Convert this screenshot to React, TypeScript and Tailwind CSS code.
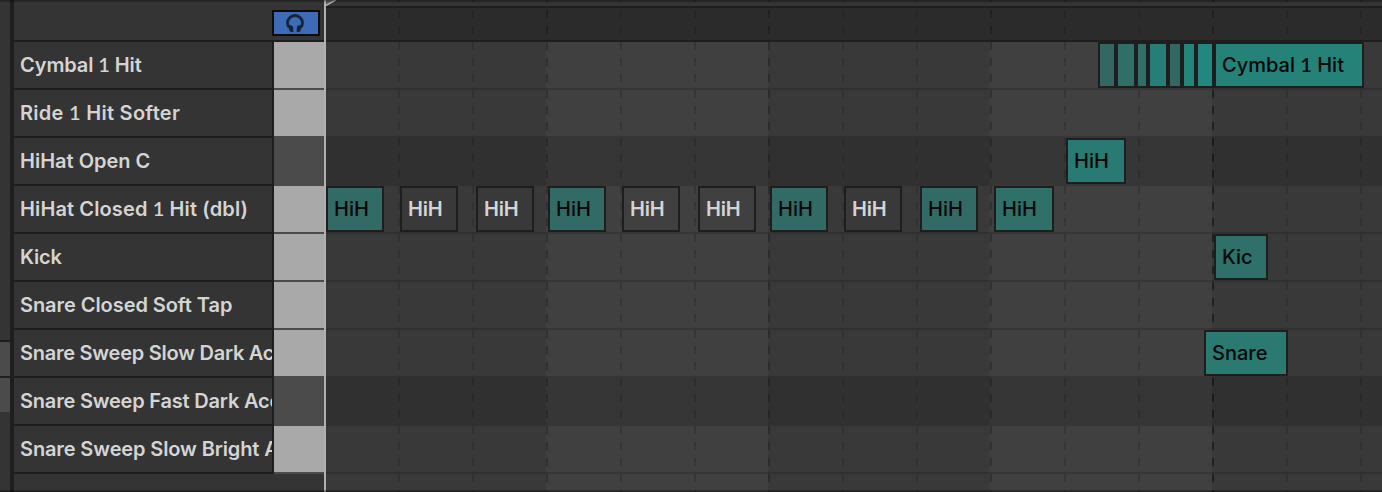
import React from 'react';

type Note = { left: number; width: number; tone: string; label?: string; light?: boolean };
type Track = { name: string; spacing: string; black?: boolean; notes?: Note[] };

const GREY = 'bg-[#393939]';
const GREY_BRIGHT = 'bg-[#404040]';
const TEAL = 'bg-[#326b65]';

const tracks: Track[] = [
  {
    name: 'Cymbal 1 Hit', spacing: 'tracking-[-0.1px]',
    notes: [
      { left: 772, width: 18, tone: 'bg-[#346762]' },
      { left: 790, width: 20, tone: 'bg-[#306e68]' },
      { left: 810, width: 12, tone: 'bg-[#306e68]' },
      { left: 822, width: 20, tone: 'bg-[#277e76]' },
      { left: 842, width: 14, tone: 'bg-[#346762]' },
      { left: 856, width: 14, tone: 'bg-[#23867d]' },
      { left: 870, width: 18, tone: 'bg-[#22877e]' },
      { left: 888, width: 150, tone: 'bg-[#248279]', label: 'Cymbal 1 Hit' },
    ],
  },
  { name: 'Ride 1 Hit Softer', spacing: 'tracking-[0.28px]' },
  { name: 'HiHat Open C', spacing: 'tracking-[0px]', black: true, notes: [{ left: 740, width: 60, tone: 'bg-[#297a72]', label: 'HiH' }] },
  {
    name: 'HiHat Closed 1 Hit (dbl)', spacing: 'tracking-[0.12px]',
    notes: [
      { left: 0, width: 58, tone: TEAL, label: 'HiH' },
      { left: 74, width: 58, tone: GREY, label: 'HiH', light: true },
      { left: 150, width: 58, tone: GREY, label: 'HiH', light: true },
      { left: 222, width: 58, tone: TEAL, label: 'HiH' },
      { left: 296, width: 58, tone: GREY_BRIGHT, label: 'HiH', light: true },
      { left: 372, width: 58, tone: GREY_BRIGHT, label: 'HiH', light: true },
      { left: 444, width: 58, tone: TEAL, label: 'HiH' },
      { left: 518, width: 58, tone: GREY, label: 'HiH', light: true },
      { left: 594, width: 58, tone: TEAL, label: 'HiH' },
      { left: 668, width: 60, tone: 'bg-[#2f7069]', label: 'HiH' },
    ],
  },
  { name: 'Kick', spacing: 'tracking-[-0.2px]', notes: [{ left: 888, width: 54, tone: 'bg-[#2f706a]', label: 'Kic' }] },
  { name: 'Snare Closed Soft Tap', spacing: 'tracking-[-0.06px]' },
  { name: 'Snare Sweep Slow Dark Acc', spacing: 'tracking-[-0.25px]', notes: [{ left: 878, width: 84, tone: 'bg-[#2a7a72]', label: 'Snare' }] },
  { name: 'Snare Sweep Fast Dark Acc', spacing: 'tracking-[-0.2px]', black: true },
  { name: 'Snare Sweep Slow Bright A', spacing: 'tracking-[-0.12px]' },
];

const columns = Array.from({ length: 15 }, (_, i) => i);

/** Label text; the digit one is set in a face whose "1" has a foot. */
function Label({ text }: { text: string }) {
  const [before, after] = text.split('1');
  if (after === undefined) return <span>{text}</span>;
  return (
    <span>
      {before}
      <span className="font-['Lato'] font-semibold leading-none">1</span>
      {after}
    </span>
  );
}

function NoteBox({ note }: { note: Note }) {
  return (
    <div
      className={`absolute top-0 flex h-[46px] items-center overflow-hidden whitespace-pre border-2 border-[#1e1e1e] pl-1.5 ${note.tone} ${note.light ? 'font-semibold tracking-[-0.2px] text-[#d4d4d4]' : 'text-[#040807]'}`}
      style={{ left: note.left, width: note.width }}
    >
      {note.label && <Label text={note.label} />}
    </div>
  );
}

function HeadphoneButton() {
  return (
    <button className="flex h-[26px] w-12 items-center justify-center border-2 border-[#0c0c0c] bg-[#3d6bb8] pr-0.5">
      <svg width="18" height="18" viewBox="0 0 18 18">
        <path d="M3 13C1.9 11.8 1.5 10.4 1.5 8.8A7.5 7.3 0 0 1 16.5 8.8C16.5 10.4 16.1 11.8 15 13" fill="none" stroke="#15233c" strokeWidth="2.8" />
        <path d="M1.6 11.6L5 11.2Q7.3 11.9 7.3 14.2V18H5.2Q3.3 17.6 3 15.2Z M16.4 11.6L13 11.2Q10.7 11.9 10.7 14.2V18H12.8Q14.7 17.6 15 15.2Z" fill="#15233c" />
      </svg>
    </button>
  );
}

function Grid() {
  return (
    <div className="absolute inset-0 flex">
      {columns.map((i) => {
        const bright = (i >= 3 && i < 6) || (i >= 9 && i < 12);
        const dash = i === 12
          ? 'bg-[repeating-linear-gradient(#1f1f1f_0_8px,transparent_8px_16px)]'
          : i % 3 === 0
            ? 'bg-[repeating-linear-gradient(rgba(0,0,0,0.24)_0_8px,transparent_8px_16px)]'
            : 'bg-[repeating-linear-gradient(rgba(0,0,0,0.15)_0_8px,transparent_8px_16px)]';
        return (
          <div key={i} className={`relative flex shrink-0 flex-col ${i === 0 ? 'w-[72px]' : 'w-[74px]'}`}>
            <div className="h-2 border-b-2 border-[#1e1e1e] bg-[#343434]" />
            <div className="h-[34px] border-b-2 border-[#1e1e1e] bg-[#2b2b2b]" />
            <div className={`flex-1 ${bright ? GREY_BRIGHT : GREY}`} />
            {i > 0 && <div className={`absolute -top-1.5 bottom-0 left-0 w-0.5 ${dash}`} />}
          </div>
        );
      })}
    </div>
  );
}

export default function App() {
  return (
    <div className="relative flex h-[492px] w-[1382px] overflow-hidden bg-[#343434] font-['Inter',sans-serif] text-xl font-medium text-[#d4d4d4]">
      <div className="flex w-3.5 shrink-0 flex-col border-r-4 border-[#1e1e1e] pt-[340px]">
        <div className="h-9 border-t-2 border-[#1e1e1e] bg-[#4b4b4b]" />
        <div className="h-9 border-t-2 border-[#1e1e1e] bg-[#4b4b4b]" />
      </div>

      <div className="flex w-[310px] shrink-0 flex-col">
        <div className="flex h-[42px] items-start justify-end border-b-2 border-[#1e1e1e] pr-1 pt-2.5">
          <HeadphoneButton />
        </div>
        {tracks.map((t) => (
          <div key={t.name} className="flex h-12">
            <div className={`flex w-[260px] items-center overflow-hidden whitespace-pre border-b-2 border-r-2 border-[#1e1e1e] pl-1.5 font-semibold ${t.spacing}`}>
              <Label text={t.name} />
            </div>
            <div className={`flex-1 border-b-2 border-[#4b4b4b] ${t.black ? 'bg-[#4b4b4b]' : 'bg-[#a9a9a9]'}`} />
          </div>
        ))}
      </div>

      <div className="w-0.5 shrink-0 bg-[#b0b0b0]" />

      <div className="relative flex-1 overflow-hidden">
        <Grid />
        <svg className="absolute left-0 top-0" width="10" height="6" viewBox="0 0 10 6">
          <path d="M0 0H9L0 5Z" fill="#5c5c5c" />
          <path d="M9.5 0L0 5.4" stroke="#b0b0b0" strokeWidth="1.6" />
        </svg>
        <div className="relative pt-[40px]">
          {tracks.map((t, i) => (
            <div key={t.name} className="relative h-12">
              {t.black && <div className="h-[50px] bg-black/15" />}
              {!t.black && i > 0 && <div className={`h-0.5 ${tracks[i - 1].black ? '' : 'bg-black/15'}`} />}
              <div className="absolute left-0 top-0.5">
                {t.notes?.map((n) => <NoteBox key={n.left} note={n} />)}
              </div>
            </div>
          ))}
          <div className="h-0.5 bg-black/15" />
        </div>
      </div>

      <div className="pointer-events-none absolute inset-x-0 top-0 h-[3px] bg-gradient-to-b from-black/40 to-transparent" />
      <div className="pointer-events-none absolute inset-x-0 bottom-0 h-0.5 bg-gradient-to-t from-black/50 to-black/20" />
    </div>
  );
}
